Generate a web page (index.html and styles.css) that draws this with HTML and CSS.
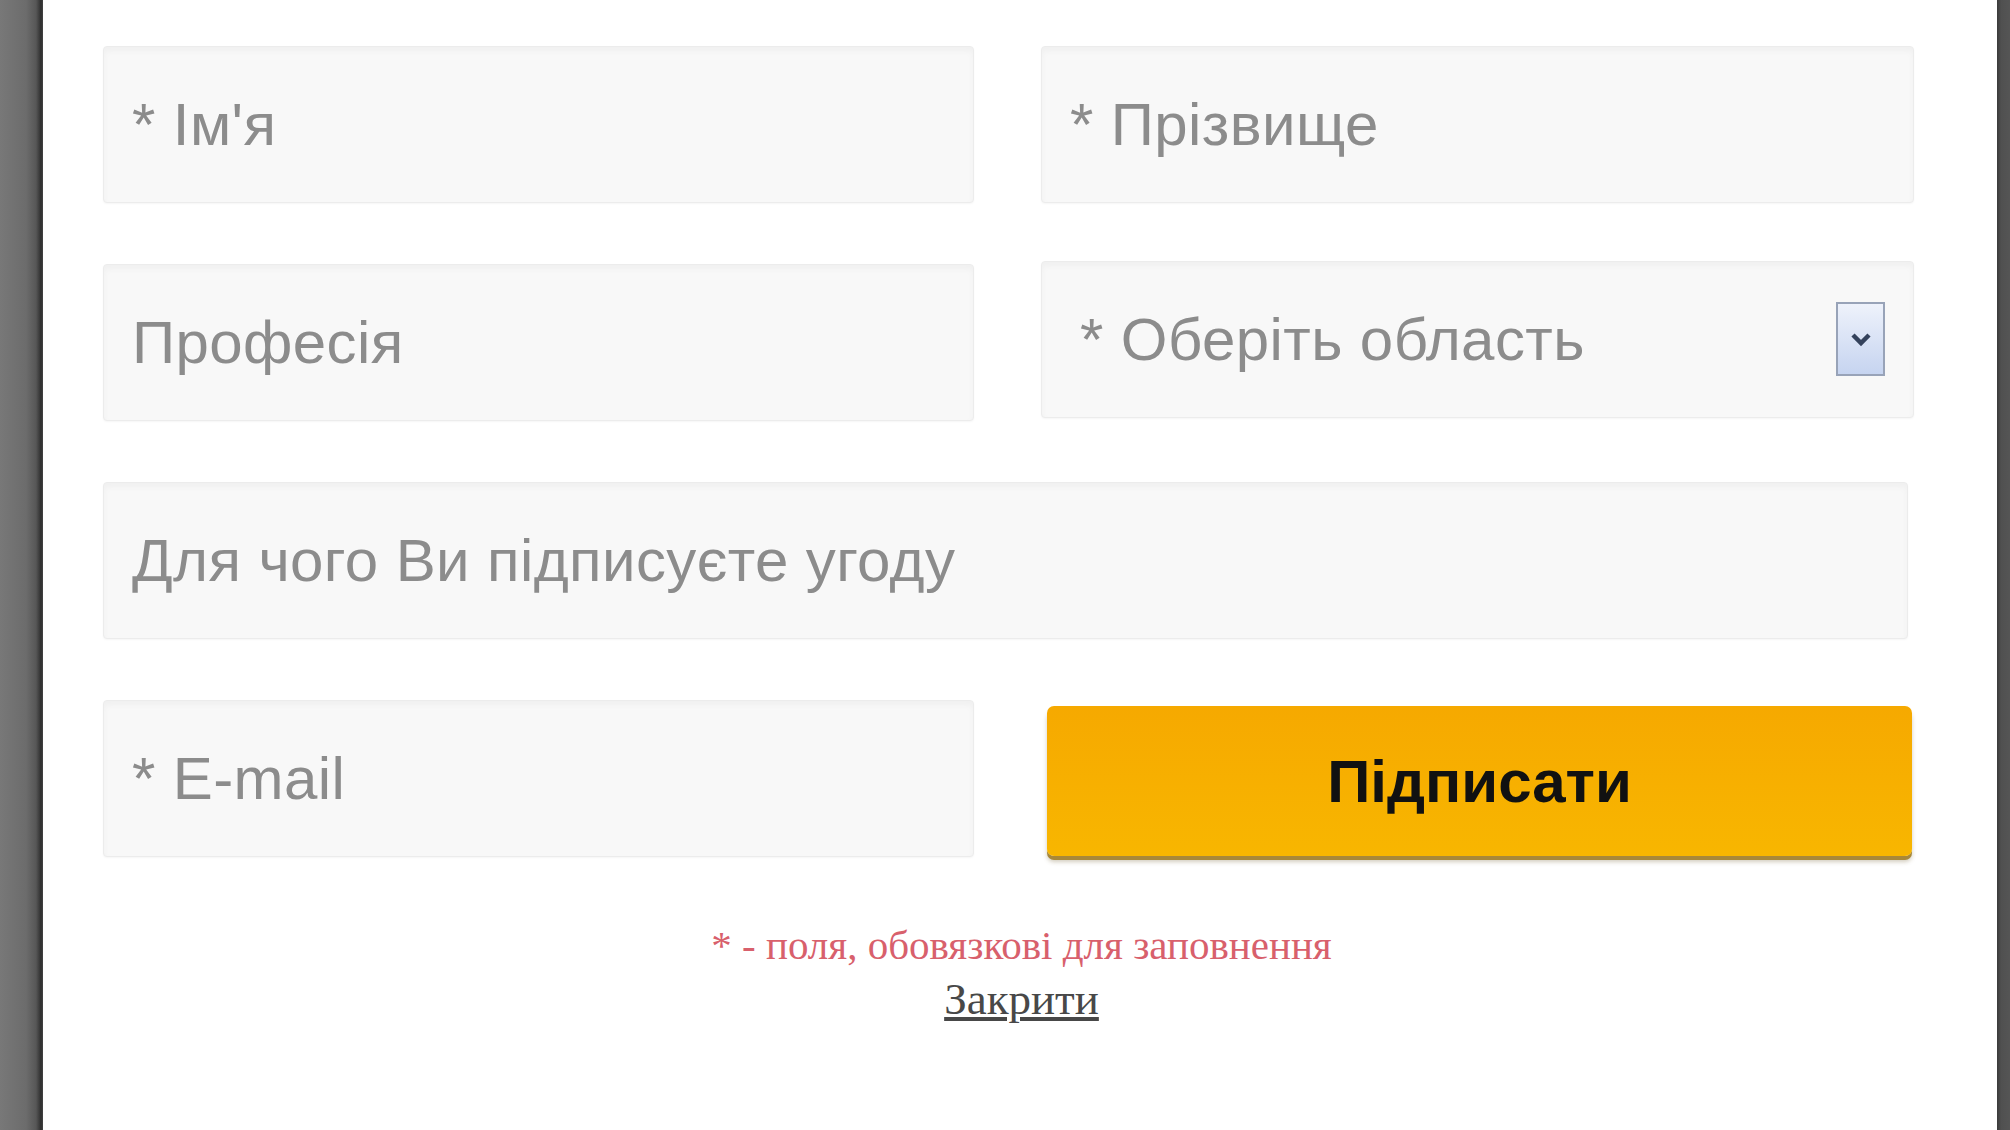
FILE: index.html
```html
<!DOCTYPE html>
<html lang="uk">
    <head>
        <meta charset="UTF-8">
        <meta name="viewport" content="width=device-width, initial-scale=1.0">
        <title>Підписати угоду</title>
        <link rel="stylesheet" href="styles.css">
    </head>
    <body>
        <div class="page">
            <div class="side side-left"></div>

            <div class="panel">
                <form class="sign-form" onsubmit="return false;">
                    <input class="field" type="text" placeholder="* Ім'я">
                    <input class="field" type="text" placeholder="* Прізвище">

                    <input class="field" type="text" placeholder="Професія">
                    <div class="select-wrap">
                        <select class="field field-select">
                            <option>* Оберіть область</option>
                        </select>
                        <span class="select-arrow">
                            <svg width="22" height="16" viewBox="0 0 22 16">
                                <path d="M3 4 L11 12 L19 4" fill="none" stroke="#34425c" stroke-width="4.5"/>
                            </svg>
                        </span>
                    </div>

                    <input class="field field-wide" type="text" placeholder="Для чого Ви підписуєте угоду">

                    <input class="field" type="email" placeholder="* E-mail">
                    <button class="submit" type="submit">Підписати</button>
                </form>

                <div class="form-note">
                    <p class="required">* - поля, обовязкові для заповнення</p>
                    <a class="close-link" href="#">Закрити</a>
                </div>
            </div>

            <div class="side side-right"></div>
        </div>
    </body>
</html>
```

FILE: styles.css
```css
html, body {
    margin: 0;
    height: 100%;
}
body {
    font-family: "Liberation Sans", Arial, sans-serif;
    background: #fff;
}
.page {
    display: flex;
    height: 1130px;
}
.side-left {
    width: 43px;
    background: linear-gradient(to right, #787878 0, #6c6c6c 26px, #575757 36px, #2e2e2e 41px, #444 43px);
}
.side-right {
    width: 13px;
    background: linear-gradient(to right, #3a3a3a 0, #505050 4px, #555 13px);
}
.panel {
    flex: 1;
    background: #fff;
    padding: 46px 83px 0 60px;
}

.sign-form {
    display: grid;
    grid-template-columns: 871px 873px;
    column-gap: 67px;
    row-gap: 61px;
}
.field {
    box-sizing: border-box;
    height: 157px;
    width: 100%;
    margin: 0;
    padding: 0 28px;
    border: 1px solid #ececec;
    border-radius: 4px;
    background: #f8f8f8;
    box-shadow: inset 0 4px 6px rgba(0,0,0,0.035), 0 1px 2px rgba(0,0,0,0.04);
    font-family: "Liberation Sans", Arial, sans-serif;
    font-size: 60px;
    letter-spacing: 0.4px;
    color: #8a8a8a;
    outline: none;
}
.field::placeholder {
    color: #8c8c8c;
}
.field-wide {
    grid-column: 1 / 3;
    width: 1805px;
}

.select-wrap {
    position: relative;
    margin-top: -3px;
}
.field-select {
    appearance: none;
    -webkit-appearance: none;
    padding-left: 38px;
    color: #8c8c8c;
}
.select-arrow {
    position: absolute;
    top: 41px;
    right: 29px;
    width: 49px;
    height: 74px;
    box-sizing: border-box;
    border: 2px solid #98a3b8;
    background: linear-gradient(to bottom, #eef2fb, #c6d4f0);
    display: flex;
    align-items: center;
    justify-content: center;
}

.submit {
    height: 150px;
    margin: 6px 2px 0 6px;
    border: none;
    border-radius: 7px;
    background: linear-gradient(to bottom, #f6a900, #f8b600);
    box-shadow: 0 4px 0 #a88838, 0 6px 4px rgba(110,90,40,0.3);
    font-family: "Liberation Sans", Arial, sans-serif;
    font-size: 60px;
    font-weight: bold;
    color: #111;
    cursor: pointer;
}

.form-note {
    text-align: center;
    font-family: "Liberation Serif", "Times New Roman", serif;
    margin-top: 64px;
    padding-left: 26px;
}
.required {
    margin: 0;
    font-size: 41px;
    line-height: 48px;
    color: #d8606c;
}
.close-link {
    display: inline-block;
    margin-top: 4px;
    font-size: 45px;
    line-height: 52px;
    color: #484848;
}
```
